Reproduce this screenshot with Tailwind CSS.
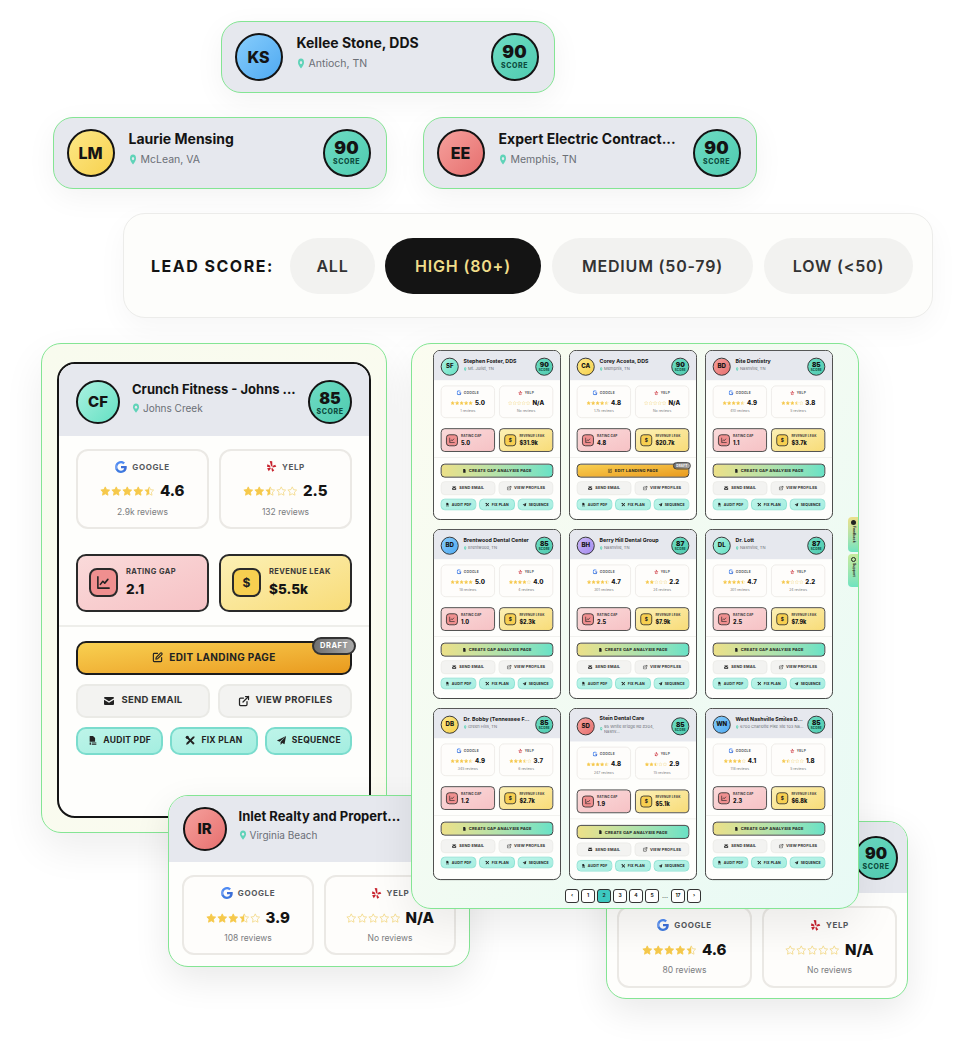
<!DOCTYPE html>
<html>
<head>
<meta charset="utf-8">
<script src="https://cdn.jsdelivr.net/npm/@tailwindcss/browser@4"></script>
</head>
<body class="bg-white [font-family:Inter,'Liberation_Sans',sans-serif]">
<div id="root" class="relative w-[973px] h-[1043px] overflow-hidden bg-white"></div>
<script>
const grads={teal:'bg-linear-to-br from-[#a9f2e1] to-[#62e0c3]',yellow:'bg-linear-to-br from-[#fde885] to-[#f7d14c]',red:'bg-linear-to-br from-[#f5a09c] to-[#e66f6f]',blue:'bg-linear-to-br from-[#86cdfc] to-[#4ea9f1]',purple:'bg-linear-to-br from-[#c9b6f7] to-[#a68bef]'};
const star='M12 2l3.1 6.3 6.9 1-5 4.9 1.2 6.9L12 17.8 5.8 21l1.2-6.9-5-4.9 6.9-1z';
const halfStar='M12 2L8.9 8.3 2 9.3l5 4.9-1.2 6.9L12 17.8z';
function stars(r){let s='';const full=Math.floor(r),half=r-full>=.3;for(let i=0;i<5;i++){const f=i<full,h=i===full&&half;s+=`<svg viewBox="0 0 24 24" class="w-[10.500px] h-[10.500px] shrink-0"><path d="${star}" fill="${f?'#f6c94c':'none'}" stroke="${f?'#f6c94c':'#f4da8c'}" stroke-width="2" stroke-linejoin="round"/>${h?`<path d="${halfStar}" fill="#f6c94c"/>`:''}</svg>`}return `<div class="flex gap-[0.5px]">${s}</div>`}
const google=`<svg viewBox="0 0 24 24" class="w-[12px] h-[12px]"><path fill="#3d6fd8" d="M23.500 12.300c0-.8-.1-1.600-.2-2.300H12v4.500h6.500c-.3 1.500-1.100 2.700-2.400 3.600v3h3.900c2.300-2.100 3.500-5.200 3.500-8.800z"/><path fill="#3f7ae0" d="M12 24c3.200 0 6-1.100 8-2.900l-3.900-3c-1.100.7-2.500 1.200-4.100 1.200-3.100 0-5.800-2.100-6.700-5H1.300v3.100C3.300 21.300 7.300 24 12 24z"/><path fill="#6f9df0" d="M5.300 14.300c-.5-1.500-.5-3.100 0-4.600V6.600H1.300c-1.700 3.300-1.700 7.500 0 10.800z"/><path fill="#4f8af2" d="M12 4.700c1.800 0 3.300.6 4.600 1.800l3.400-3.400C17.900 1.200 15.200 0 12 0 7.300 0 3.300 2.700 1.300 6.600l4 3.100c.9-2.900 3.600-5 6.700-5z"/></svg>`;
const yelp=`<svg viewBox="0 0 24 24" class="w-[11px] h-[13px]" fill="#c8242f"><path d="M8 0l5.500.8.5 10-2.500 1z"/><path d="M3 7l6.500 3.500-.5 3L2 12.500z"/><path d="M2.500 16l7-2 1 2.500L6 22.500z"/><path d="M11.500 16.500l2.500-1 4 5-4.500 3z"/><path d="M14 11l6-3 2.500 4.500-8 1.500z"/></svg>`;
const pin=(c)=>`<svg viewBox="0 0 24 24" class="${c} shrink-0" preserveAspectRatio="none"><path fill="#5fd3b8" d="M12 1a9 9 0 0 0-9 9c0 5.500 9 13 9 13s9-7.500 9-13a9 9 0 0 0-9-9z"/><circle cx="12" cy="10" r="3.500" fill="#e6e8ee"/></svg>`;
const sv=(c,inner,fill)=>`<svg viewBox="0 0 24 24" class="${c} shrink-0" ${fill?'fill="#222"':'fill="none" stroke="#222" stroke-width="2.500" stroke-linecap="round" stroke-linejoin="round"'}>${inner}</svg>`;
const icons={
 chart:c=>sv(c,'<path d="M3 3v18h18"/><path d="M7 15l4-5 3 3 5-6"/>'),
 pen:c=>sv(c,'<path d="M12 3H5a2 2 0 0 0-2 2v14a2 2 0 0 0 2 2h14a2 2 0 0 0 2-2v-7"/><path d="M18.400 2.600a1 1 0 0 1 3 3l-9 9-4 1 1-4z"/>'),
 mail:c=>sv(c,'<path d="M2 6a2 2 0 0 1 2-2h16a2 2 0 0 1 2 2v.5l-10 6-10-6z"/><path d="M2 9.500l10 6 10-6V18a2 2 0 0 1-2 2H4a2 2 0 0 1-2-2z"/>',1),
 ext:c=>sv(c,'<path d="M15 3h6v6"/><path d="M10 14 21 3"/><path d="M18 13v6a2 2 0 0 1-2 2H5a2 2 0 0 1-2-2V8a2 2 0 0 1 2-2h6"/>'),
 pdf:c=>sv(c,'<path d="M4 1h8l5 5v9H4z"/><path d="M4 17h3v5H4zM9 17h11v2H9zM9 20.500h11V22H9z"/>',1),
 tools:c=>sv(c,'<path d="M3 6l3-3 15 15-3 3z"/><path d="M21 3l-3.500 0-14 14-1 4 4-1 14-14zM2 2h0"/><circle cx="5" cy="5" r="3.500"/>',1),
 plane:c=>sv(c,'<path d="M22 2L2 12l6 2.500zM22 2L10 15.500V22l3.500-4.500 5 2.500z"/>',1),
 doc:c=>sv(c,'<path d="M5 1h9l5 5v17H5z"/>',1)
};
function score(n,big){return `<div class="${big?'w-12 h-12':'w-[44px] h-[44px]'} shrink-0 rounded-full border-2 border-[#141414] bg-linear-to-br from-[#6ddcc3] to-[#4fcbb0] flex flex-col items-center justify-center"><span class="${big?'text-[17.500px]':'text-[16px]'} leading-[18px] font-black text-[#141414]">${n}</span><span class="text-[7px] leading-[9px] font-extrabold tracking-[0.6px] text-[#0d4d40]">SCORE</span></div>`}
function avatar(t,col,big){return `<div class="${big?'w-12 h-12 text-[16px]':'w-[44px] h-[44px] text-[15px]'} ${grads[col]} shrink-0 rounded-full border-2 border-[#141414] flex items-center justify-center font-extrabold text-[#141414]">${t}</div>`}
function chip(cls,init,col,name,loc){return `<div class="absolute ${cls} w-[334px] h-[72px] rounded-[20px] border-[1.500px] border-[#84e594] bg-[#e6e8ee] shadow-[0_8px_30px_rgba(0,0,0,0.05)] pl-[13px] pr-[15px] flex items-center gap-[14px]">${avatar(init,col,1)}<div class="flex-1 min-w-0 -mt-[9px]"><div class="text-[14px] leading-[20px] font-bold text-[#141414] whitespace-nowrap">${name}</div><div class="mt-[3px] flex items-center gap-[4px] text-[10.500px] leading-[16px] text-[#6b6f76]">${pin('w-[8px] h-[11px]')}${loc}</div></div>${score(90,1)}</div>`}
function header(d,cls){return `<div class="${cls} bg-[#e6e8ee] flex items-center gap-[12px]">${avatar(d.i,d.c)}<div class="flex-1 min-w-0 -mt-[10px]"><div class="text-[13px] leading-[18px] font-bold text-[#141414] whitespace-nowrap">${d.n}</div><div class="mt-[4px] flex items-center gap-[3px] text-[10px] leading-[13px] text-[#6b6f76]">${pin('w-[8px] h-[10px]')}<span class="${d.wrap?'line-clamp-2':'whitespace-nowrap'}">${d.l}</span></div></div>${score(d.s)}</div>`}
function box(logo,label,val,rev,cls){const r=val==='N/A'?0:parseFloat(val);return `<div class="${cls} flex-1 rounded-[12px] border-2 border-[#ebe9e5] bg-[#fefdfb] flex flex-col items-center justify-center"><div class="flex items-center gap-[5px] h-[14px]">${logo}<span class="text-[8px] font-bold tracking-[0.6px] text-[#55585c]">${label}</span></div><div class="mt-[8px] flex items-center gap-[5px] h-[20px]">${stars(r)}<span class="text-[15px] font-extrabold text-[#141414]">${val}</span></div><div class="mt-[4px] text-[8.500px] leading-[12px] text-[#7a7c80]">${rev}</div></div>`}
function ratings(d,cls,h){return `<div class="${cls} flex gap-[10px]">${box(google,'GOOGLE',d.g,d.gr,h)}${box(yelp,'YELP',d.y,d.yr,h)}</div>`}
function metric(bg,ibg,icon,label,val){return `<div class="flex-1 h-[58px] rounded-[10px] border-2 border-[#2a2a2a] ${bg} flex items-center pl-[11px] gap-[8px]"><div class="w-[29px] h-[29px] rounded-[8px] border-2 border-[#2a2a2a] ${ibg} flex items-center justify-center font-bold text-[12px] text-[#222]">${icon}</div><div class="-mt-[2px]"><div class="text-[7.500px] leading-[12px] font-bold tracking-[0.4px] text-[#3a3a3a]">${label}</div><div class="mt-[3px] text-[13.500px] leading-[16px] font-extrabold text-[#141414]">${val}</div></div></div>`}
function card(d,extra){
 const main=d.edit
 ?`<div class="relative h-[34px] rounded-[10px] border-2 border-[#1c1c1c] bg-linear-to-br from-[#f8d050] to-[#e99a1c] flex items-center justify-center gap-[6px] text-[10px] font-bold tracking-[0.4px] text-[#222]">${icons.pen('w-[11px] h-[11px]')}EDIT LANDING PAGE<span class="absolute -right-[6px] -top-[6px] w-[44px] h-[18px] rounded-[9px] border-2 border-[#333] bg-linear-to-r from-[#6f6f6f] to-[#a8a8a8] flex items-center justify-center text-[7.500px] font-bold tracking-[0.5px] text-white">DRAFT</span></div>`
 :`<div class="h-[34px] rounded-[10px] border-2 border-[#1c1c1c] bg-linear-to-r from-[#ece088] to-[#68e2c6] flex items-center justify-center gap-[6px] text-[10px] font-bold tracking-[0.4px] text-[#222]">${icons.doc('w-[10px] h-[11px]')}CREATE GAP ANALYSIS PAGE</div>`;
 const grey='flex-1 h-[34px] rounded-[10px] border-2 border-[#eaeae6] bg-[#f3f3f1] flex items-center justify-center gap-[6px] text-[9.500px] font-bold tracking-[0.3px] text-[#333]';
 const tealb='flex-1 h-[28px] rounded-[10px] border-2 border-[#7adccd] bg-linear-to-br from-[#bdf4e9] to-[#a4eee0] flex items-center justify-center gap-[5px] text-[8.500px] font-bold tracking-[0.3px] text-[#222]';
 return `<div class="${extra} w-[314px] rounded-[18px] border-2 border-[#141414] bg-[#fefefc] overflow-hidden">
 ${header(d,d.wrap?'h-[80px] pt-[5px] px-[17px]':'h-[72px] pt-[5px] px-[17px]')}
 ${ratings(d,'px-[17px] pt-[13px]','h-[80px]')}
 <div class="mx-[17px] mt-[25px] flex gap-[10px]">${metric('bg-linear-to-br from-[#fadada] to-[#f6c2c5]','bg-[#ef8f8f]',icons.chart('w-[15px] h-[15px]'),'RATING GAP',d.gap)}${metric('bg-linear-to-br from-[#fcf0b4] to-[#f8dc78]','bg-[#f7cf50]','$','REVENUE LEAK',d.leak)}</div>
 <div class="mt-[13px] h-[2px] bg-[#eeeeea]"></div>
 <div class="px-[17px] pt-[14px] flex flex-col gap-[9px]">${main}
 <div class="flex gap-[8px]"><div class="${grey}">${icons.mail('w-[12px] h-[12px]')}SEND EMAIL</div><div class="${grey}">${icons.ext('w-[12px] h-[12px]')}VIEW PROFILES</div></div>
 <div class="flex gap-[7px]"><div class="${tealb}">${icons.pdf('w-[10px] h-[11px]')}AUDIT PDF</div><div class="${tealb}">${icons.tools('w-[11px] h-[11px]')}FIX PLAN</div><div class="${tealb}">${icons.plane('w-[11px] h-[11px]')}SEQUENCE</div></div></div></div>`;
}
const leads=[
{i:'SF',c:'teal',n:'Stephen Foster, DDS',l:'Mt. Juliet, TN',s:90,g:'5.0',gr:'1 reviews',y:'N/A',yr:'No reviews',gap:'5.0',leak:'$31.9k'},
{i:'CA',c:'yellow',n:'Corey Acosta, DDS',l:'Memphis, TN',s:90,g:'4.8',gr:'1.7k reviews',y:'N/A',yr:'No reviews',gap:'4.8',leak:'$20.7k',edit:1},
{i:'BD',c:'red',n:'Bite Dentistry',l:'Nashville, TN',s:85,g:'4.9',gr:'410 reviews',y:'3.8',yr:'5 reviews',gap:'1.1',leak:'$3.7k'},
{i:'BD',c:'blue',n:'Brentwood Dental Center',l:'Brentwood, TN',s:85,g:'5.0',gr:'18 reviews',y:'4.0',yr:'4 reviews',gap:'1.0',leak:'$2.3k'},
{i:'BH',c:'purple',n:'Berry Hill Dental Group',l:'Nashville, TN',s:87,g:'4.7',gr:'301 reviews',y:'2.2',yr:'24 reviews',gap:'2.5',leak:'$7.9k'},
{i:'DL',c:'teal',n:'Dr. Lott',l:'Nashville, TN',s:87,g:'4.7',gr:'301 reviews',y:'2.2',yr:'24 reviews',gap:'2.5',leak:'$7.9k'},
{i:'DB',c:'yellow',n:'Dr. Bobby (Tennessee F...',l:'Green Hills, TN',s:85,g:'4.9',gr:'345 reviews',y:'3.7',yr:'6 reviews',gap:'1.2',leak:'$2.7k'},
{i:'SD',c:'red',n:'Stein Dental Care',l:'95 White Bridge Rd #204, Nashv...',wrap:1,s:85,g:'4.8',gr:'247 reviews',y:'2.9',yr:'15 reviews',gap:'1.9',leak:'$5.1k'},
{i:'WN',c:'blue',n:'West Nashville Smiles D...',l:'6700 Charlotte Pike Ste 103 Na...',s:85,g:'4.1',gr:'118 reviews',y:'1.8',yr:'5 reviews',gap:'2.3',leak:'$6.8k'}];
const pill='h-[56px] rounded-full flex items-center justify-center text-[16px] font-semibold tracking-[0.8px]';
const pg='w-[14px] h-[14px] rounded-[3px] border border-[#333] bg-white flex items-center justify-center text-[5px] font-bold text-[#222]';
let h='';
h+=chip('left-[220.500px] top-[20.500px]','KS','blue','Kellee Stone, DDS','Antioch, TN');
h+=chip('left-[52.500px] top-[116.500px]','LM','yellow','Laurie Mensing','McLean, VA');
h+=chip('left-[422.500px] top-[116.500px]','EE','red','Expert Electric Contract...','Memphis, TN');
h+=`<div class="absolute left-[123px] top-[213px] w-[810px] h-[105px] rounded-[22px] border border-[#ececea] bg-[#fdfdfb] shadow-[0_10px_30px_rgba(0,0,0,0.04)] flex items-center"><span class="ml-[27px] w-[139px] text-[16px] font-bold tracking-[1.500px] text-[#141414] whitespace-nowrap">LEAD SCORE:</span><div class="${pill} w-[85px] bg-[#f2f2f0] text-[#333]">ALL</div><div class="${pill} ml-[10px] w-[156px] bg-[#141414] text-[#f0dd8a]">HIGH (80+)</div><div class="${pill} ml-[11px] w-[201px] bg-[#f2f2f0] text-[#333]">MEDIUM (50-79)</div><div class="${pill} ml-[11px] w-[149px] bg-[#f2f2f0] text-[#333]">LOW (&lt;50)</div></div>`;
h+=`<div class="absolute left-[41px] top-[343px] w-[346px] h-[490px] rounded-[20px] border-[1.500px] border-[#84e594] bg-linear-to-br from-[#f8fbee] to-[#fbfbf0] shadow-[0_16px_40px_rgba(0,0,0,0.07)] pl-[15px] pt-[17.500px]">${card({i:'CF',c:'teal',n:'Crunch Fitness - Johns ...',l:'Johns Creek',s:85,g:'4.6',gr:'2.9k reviews',y:'2.5',yr:'132 reviews',gap:'2.1',leak:'$5.5k',edit:1},'h-[456px]')}</div>`;
h+=`<div class="absolute left-[168px] top-[795px] w-[302px] h-[172px] rounded-[20px] border-[1.500px] border-[#84e594] bg-[#fefefc] shadow-[0_12px_36px_rgba(0,0,0,0.09)] overflow-hidden">${header({i:'IR',c:'red',n:'Inlet Realty and Propert...',l:'Virginia Beach',s:90},'h-[66px] px-[13.500px]')}${ratings({g:'3.9',gr:'108 reviews',y:'N/A',yr:'No reviews'},'px-[13px] pt-[13px]','h-[80px]')}</div>`;
h+=`<div class="absolute left-[606px] top-[821px] w-[302px] h-[178px] rounded-[20px] border-[1.500px] border-[#84e594] bg-[#fefefc] shadow-[0_12px_36px_rgba(0,0,0,0.09)] overflow-hidden"><div class="h-[71px] bg-[#e6e8ee] flex items-center justify-end pr-[9px]">${score(90)}</div>${ratings({g:'4.6',gr:'80 reviews',y:'N/A',yr:'No reviews'},'px-[10px] pt-[13px]','h-[82px]')}</div>`;
const cells=leads.map((d,i)=>`<div class="w-[128px] ${i>5?'h-[172px]':'h-[170px]'}">${card(d,'origin-top-left scale-[0.4076] '+(i>5?'h-[422px]':'h-[417px]'))}</div>`).join('');
const nums=['‹','1','2','3','4','5'].map(t=>`<div class="${t==='2'?pg.replace('bg-white','bg-[#3cc8c0]'):pg}">${t}</div>`).join('');
h+=`<div class="absolute left-[411px] top-[343px] w-[448px] h-[566px] rounded-[20px] border-[1.500px] border-[#84e594] bg-linear-to-br from-[#fbfcf0] to-[#e8faf5] shadow-[0_16px_44px_rgba(0,0,0,0.08)] pl-[21px] pt-[5.500px]">
 <div class="grid grid-cols-[128px_128px_128px] gap-x-[8px] gap-y-[9px]">${cells}</div>
 <div class="mt-[9px] ml-[132px] flex items-center gap-[2px]">${nums}<span class="w-[8px] text-center text-[7px] leading-none text-[#555]">…</span><div class="${pg}">17</div><div class="${pg}">›</div></div>
 <div class="absolute right-0 top-[173px] w-[10px] h-[35px] rounded-l-[4px] bg-linear-to-b from-[#ece08a] to-[#6fe3c0] flex flex-col items-center pt-[3px] gap-[1px]"><span class="w-[5px] h-[5px] rounded-full bg-[#222]"></span><span class="[writing-mode:vertical-rl] text-[3.500px] font-bold text-[#222]">Feedback</span></div>
 <div class="absolute right-0 top-[210px] w-[10px] h-[33px] rounded-l-[4px] bg-linear-to-b from-[#c8ea9c] to-[#6fe3c0] flex flex-col items-center pt-[3px] gap-[1px]"><span class="w-[5px] h-[5px] rounded-full border border-[#222]"></span><span class="[writing-mode:vertical-rl] text-[3.500px] font-bold text-[#222]">Support</span></div>
</div>`;
document.getElementById('root').innerHTML=h;
</script>
</body>
</html>
